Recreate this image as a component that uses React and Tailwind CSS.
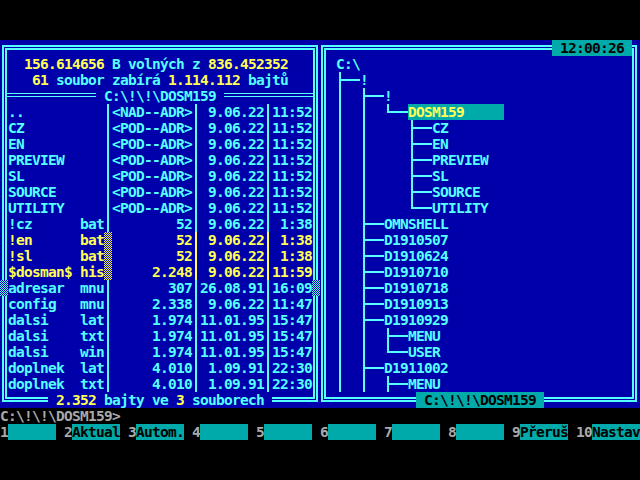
import React from "react";

const files = [
  ["..", "", "<NAD--ADR>", "9.06.22", "11:52"],
  ["CZ", "", "<POD--ADR>", "9.06.22", "11:52"],
  ["EN", "", "<POD--ADR>", "9.06.22", "11:52"],
  ["PREVIEW", "", "<POD--ADR>", "9.06.22", "11:52"],
  ["SL", "", "<POD--ADR>", "9.06.22", "11:52"],
  ["SOURCE", "", "<POD--ADR>", "9.06.22", "11:52"],
  ["UTILITY", "", "<POD--ADR>", "9.06.22", "11:52"],
  ["!cz", "bat", "52", "9.06.22", "1:38"],
  ["!en", "bat", "52", "9.06.22", "1:38", true],
  ["!sl", "bat", "52", "9.06.22", "1:38", true],
  ["$dosman$", "his", "2.248", "9.06.22", "11:59", true],
  ["adresar", "mnu", "307", "26.08.91", "16:09"],
  ["config", "mnu", "2.338", "9.06.22", "11:47"],
  ["dalsi", "lat", "1.974", "11.01.95", "15:47"],
  ["dalsi", "txt", "1.974", "11.01.95", "15:47"],
  ["dalsi", "win", "1.974", "11.01.95", "15:47"],
  ["doplnek", "lat", "4.010", "1.09.91", "22:30"],
  ["doplnek", "txt", "4.010", "1.09.91", "22:30"],
];

// rows 1..21 of the tree, each string starts at column 41
const tree = [
  [" ", "C:\\"],
  [" ├──", "!"],
  [" │  ├──", "!"],
  [" │  │  └──", "DOSM159", true],
  [" │  │     ├──", "CZ"],
  [" │  │     ├──", "EN"],
  [" │  │     ├──", "PREVIEW"],
  [" │  │     ├──", "SL"],
  [" │  │     ├──", "SOURCE"],
  [" │  │     └──", "UTILITY"],
  [" │  ├──", "OMNSHELL"],
  [" │  ├──", "D1910507"],
  [" │  ├──", "D1910624"],
  [" │  ├──", "D1910710"],
  [" │  ├──", "D1910718"],
  [" │  ├──", "D1910913"],
  [" │  ├──", "D1910929"],
  [" │  │  ├──", "MENU"],
  [" │  │  └──", "USER"],
  [" │  ├──", "D1911002"],
  [" │  │  ├──", "MENU"],
];

const keys = [
  ["1", ""],
  ["2", "Aktual"],
  ["3", "Autom."],
  ["4", ""],
  ["5", ""],
  ["6", ""],
  ["7", ""],
  ["8", ""],
  ["9", "Přeruš"],
  ["10", "Nastav"],
];

// box drawing chars drawn as 8x16 cells
const Cell = ({ ch }) => {
  if (ch === "│")
    return (
      <span className="flex w-2 h-4">
        <span className="ml-[3px] w-[2px] h-4 bg-[#55ffff]" />
      </span>
    );
  if (ch === "├")
    return (
      <span className="flex w-2 h-4">
        <span className="ml-[3px] w-[2px] h-4 bg-[#55ffff]" />
        <span className="flex-1 h-[2px] mt-[7px] bg-[#55ffff]" />
      </span>
    );
  if (ch === "└")
    return (
      <span className="flex w-2 h-4">
        <span className="ml-[3px] w-[2px] h-[9px] bg-[#55ffff]" />
        <span className="flex-1 h-[2px] mt-[7px] bg-[#55ffff]" />
      </span>
    );
  if (ch === "─")
    return (
      <span className="flex w-2 h-4">
        <span className="w-2 h-[2px] mt-[7px] bg-[#55ffff]" />
      </span>
    );
  return <span className="w-2 h-4" />;
};

const Sep = ({ sel }) => (
  <span className="flex w-2 h-4">
    <span
      className={
        sel
          ? "ml-[3px] w-[2px] h-4 bg-[#ffff55]"
          : "ml-[3px] w-[2px] h-4 bg-[#55ffff]"
      }
    />
  </span>
);

const FileRow = ({ f }) => {
  const [name, ext, size, date, time, sel] = f;
  return (
    <div
      className={
        sel ? "flex h-4 pl-[1px] text-[#ffff55]" : "flex h-4 pl-[1px] text-[#55ffff]"
      }
    >
      <span className="w-[96px]">{(name.padEnd(9) + ext).padEnd(12)}</span>
      {sel ? (
        <span className="w-2 h-4 bg-[repeating-conic-gradient(#ffff55_0%_25%,#0000aa_0%_50%)] bg-[length:2px_2px]" />
      ) : (
        <Sep />
      )}
      <span className="w-[80px]">{size.padStart(10)}</span>
      <Sep sel={sel} />
      <span className="w-[64px]">{date.padStart(8)}</span>
      <Sep sel={sel} />
      <span className="w-[40px]">{time.padStart(5)}</span>
    </div>
  );
};

const TreeRow = ({ row }) => {
  const [pattern, name, hl] = row;
  return (
    <div className="flex h-4 pl-[2px] text-[#55ffff]">
      {[...pattern].map((ch, i) => (
        <Cell key={i} ch={ch} />
      ))}
      {hl ? (
        <span className="w-[96px] bg-[#00aaaa] text-[#ffff55]">{name}</span>
      ) : (
        <span>{name}</span>
      )}
    </div>
  );
};

// double line frame: 2px line, 1px gap, 2px line
const Frame = ({ children }) => (
  <div className="w-[316px] h-[357px] border-2 border-[#55ffff] p-[1px]">
    <div className="relative h-full border-2 border-[#55ffff] pt-[6px]">{children}</div>
  </div>
);

export default function App() {
  return (
    <div className="w-[640px] h-[480px] overflow-hidden bg-black whitespace-pre font-['DejaVu_Sans_Mono',monospace] font-bold text-[14.5px] tracking-[-0.73px] leading-[16px]">
      <div className="h-[40px]" />

      <div className="flex h-[368px] bg-[#0000aa]">
        {/* left panel */}
        <div className="w-[320px] pl-[2px] pt-[5px]">
          <Frame>
            <div className="h-4 pl-[1px] text-[#55ffff]">
              {"  "}
              <span className="text-[#ffff55]">156.614656</span>
              {" B volných z "}
              <span className="text-[#ffff55]">836.452352</span>
            </div>
            <div className="h-4 pl-[1px] text-[#55ffff]">
              {"   "}
              <span className="text-[#ffff55]">61</span>
              {" soubor zabírá "}
              <span className="text-[#ffff55]">1.114.112</span>
              {" bajtů"}
            </div>
            <div className="flex h-4 items-start text-[#55ffff]">
              <div className="flex-1 mt-[5px] h-[4px] border-y-[1.5px] border-[#55ffff]" />
              <span>{" C:\\!\\!\\DOSM159 "}</span>
              <div className="flex-1 mt-[5px] h-[4px] border-y-[1.5px] border-[#55ffff]" />
            </div>
            {files.map((f, i) => (
              <FileRow key={i} f={f} />
            ))}

            {/* scroll marks on the frame */}
            <span className="absolute left-[-7px] top-[230px] w-2 h-4 bg-[repeating-conic-gradient(#55ffff_0%_25%,#0000aa_0%_50%)] bg-[length:2px_2px]" />
            <span className="absolute left-[305px] top-[230px] w-2 h-4 bg-[repeating-conic-gradient(#55ffff_0%_25%,#0000aa_0%_50%)] bg-[length:2px_2px]" />

            <span className="absolute left-[41px] top-[342px] h-4 bg-[#0000aa] text-[#55ffff]">
              {" "}
              <span className="text-[#ffff55]">2.352</span>
              {" bajty ve "}
              <span className="text-[#ffff55]">3</span>
              {" souborech "}
            </span>
          </Frame>
        </div>

        {/* right panel */}
        <div className="w-[320px] pl-[1px] pt-[5px]">
          <Frame>
            {tree.map((row, i) => (
              <TreeRow key={i} row={row} />
            ))}

            <span className="absolute left-[226px] top-[-10px] w-[80px] h-4 bg-[#00aaaa] text-black">
              {" 12:00:26 "}
            </span>
            <span className="absolute left-[90px] top-[342px] w-[128px] h-4 bg-[#00aaaa] text-black">
              {" C:\\!\\!\\DOSM159 "}
            </span>
          </Frame>
        </div>
      </div>

      <div className="h-4 text-[#aaaaaa]">{"C:\\!\\!\\DOSM159>"}</div>

      <div className="flex h-4 gap-2">
        {keys.map(([n, label]) => (
          <div key={n} className="flex">
            <span className="text-[#aaaaaa]">{n}</span>
            <span className="w-[48px] bg-[#00aaaa] text-black">{label}</span>
          </div>
        ))}
      </div>
    </div>
  );
}
